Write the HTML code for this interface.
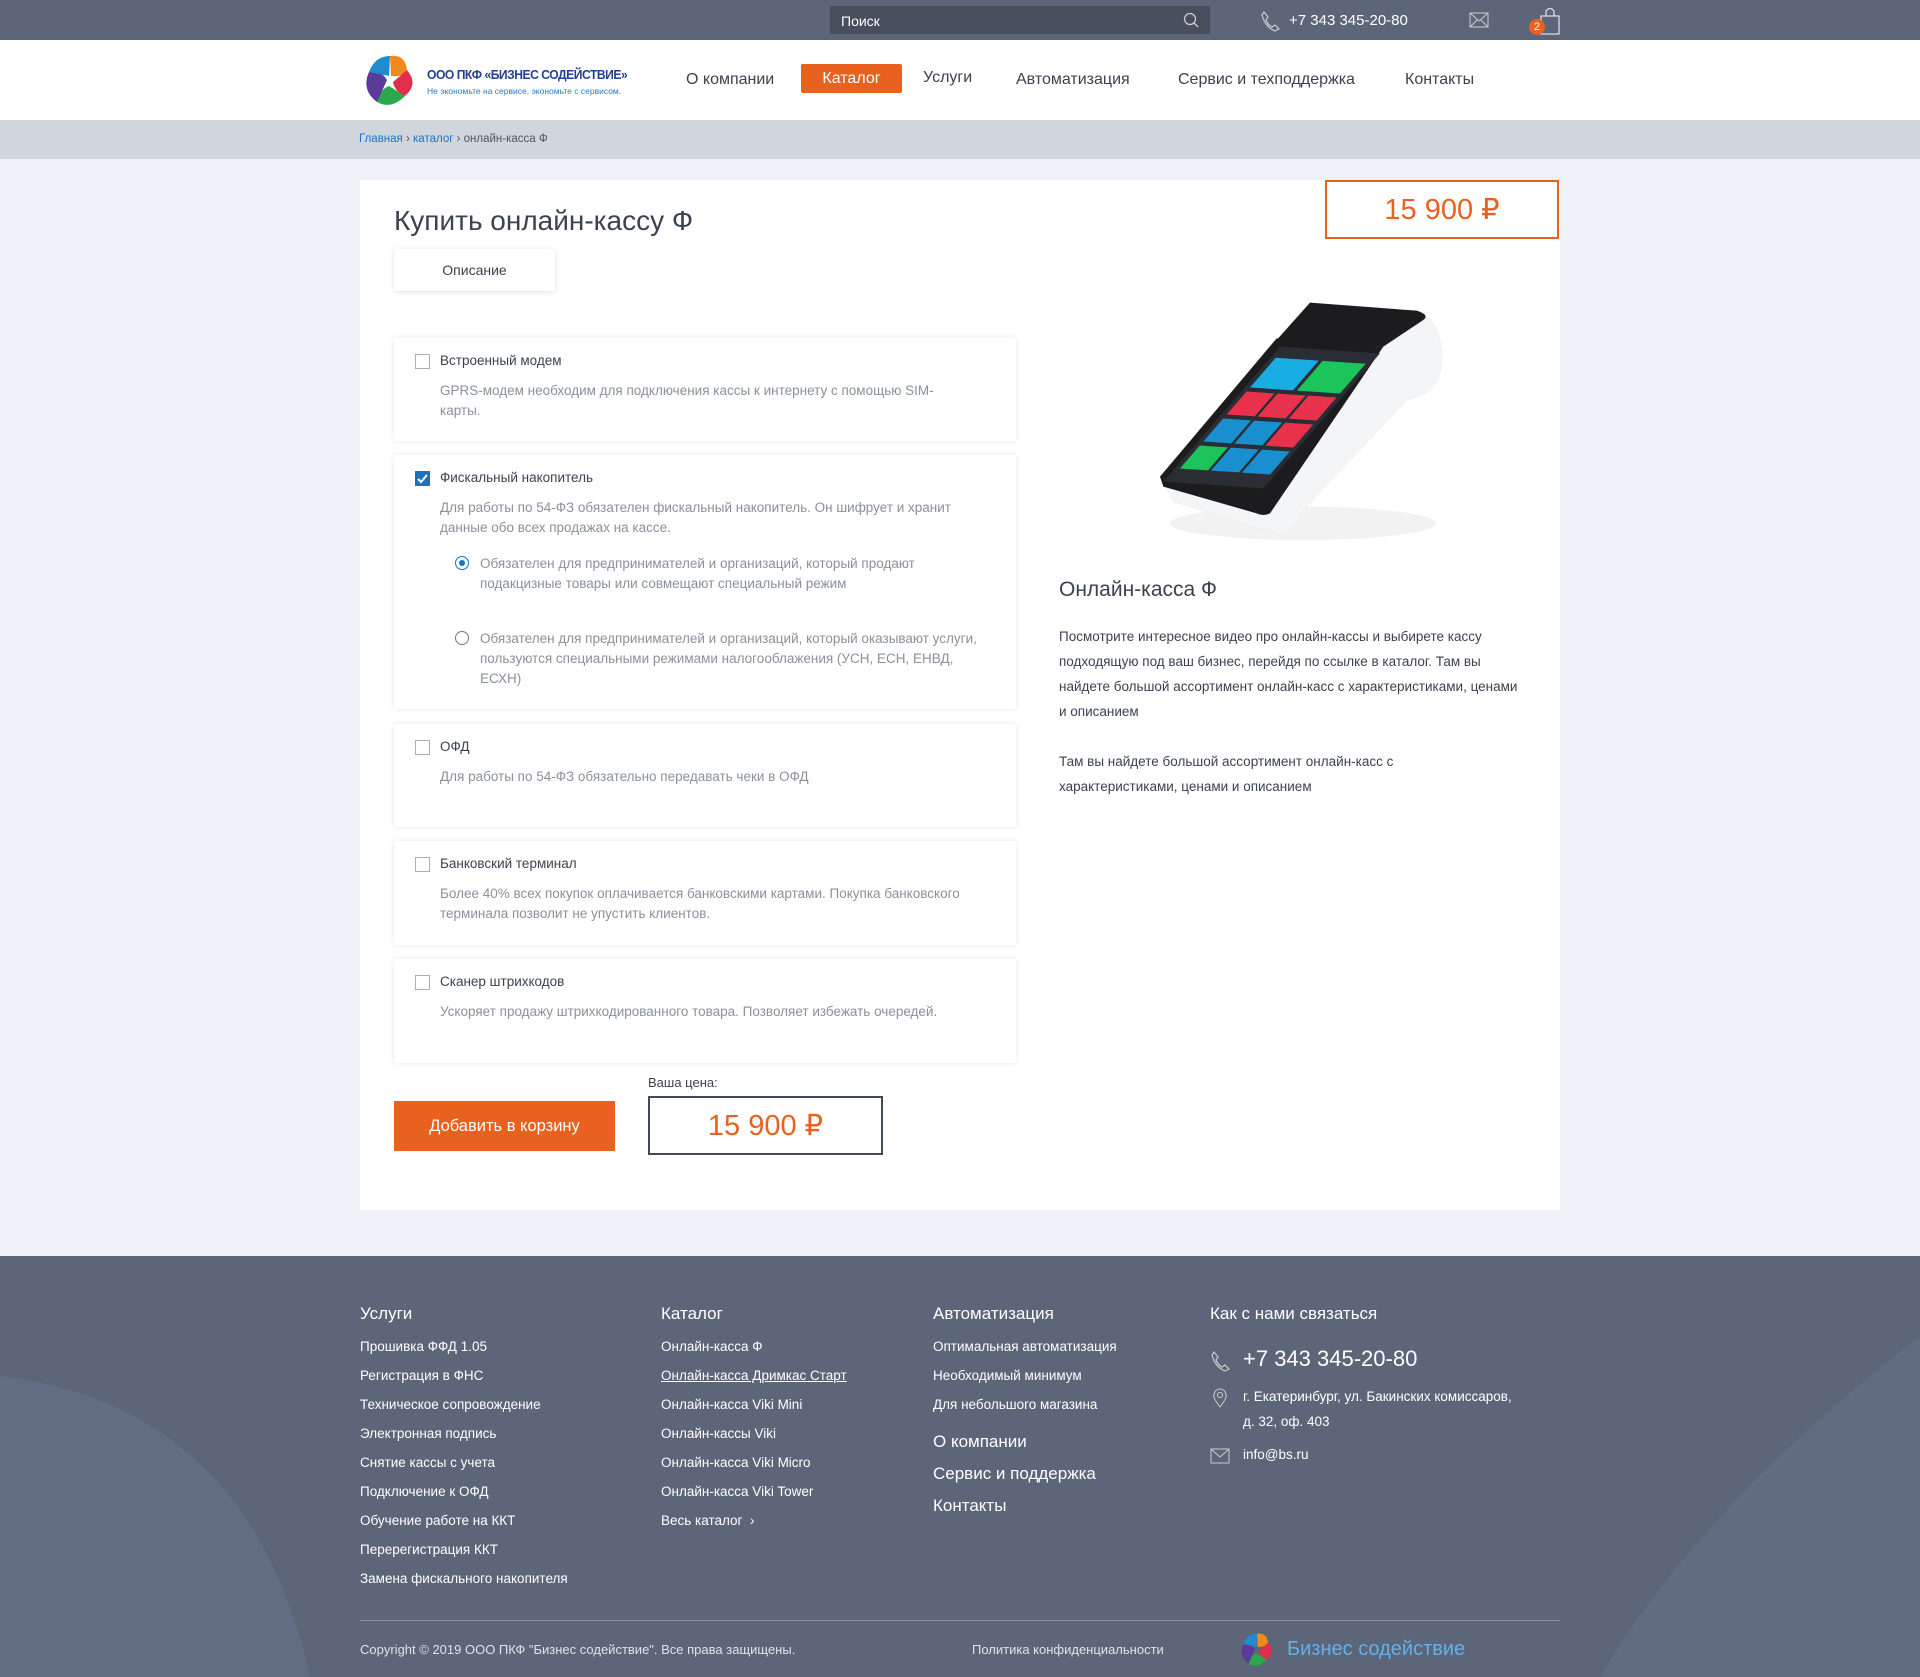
<!DOCTYPE html>
<html><head><meta charset="utf-8"><style>
*{margin:0;padding:0;box-sizing:border-box}
body{width:1920px;height:1677px;background:#eef2f6;font-family:"Liberation Sans",sans-serif;position:relative;overflow:hidden;color:#3b4250}
.a{position:absolute;white-space:nowrap}
.top{position:absolute;left:0;top:0;width:1920px;height:40px;background:#5c6678}
.hdr{position:absolute;left:0;top:40px;width:1920px;height:80px;background:#fff;box-shadow:0 2px 4px rgba(0,0,0,.12)}
.bc{position:absolute;left:0;top:120px;width:1920px;height:39px;background:#cfd6de}
.nav{font-size:16px;color:#3b4250;top:71px}
.card{position:absolute;left:360px;top:180px;width:1200px;height:1030px;background:#fff}
.opt{position:absolute;left:394px;width:622px;background:#fff;box-shadow:0 0 6px rgba(0,0,0,.1)}
.cb{position:absolute;left:21px;top:16px;width:15px;height:15px;border:1px solid #aab0b8;background:#fff}
.ot{position:absolute;left:46px;top:15px;font-size:13.5px;color:#3b4250}
.od{position:absolute;left:46px;top:43px;font-size:13.5px;color:#8a919c;line-height:20px;width:540px;white-space:normal}
.rd{position:absolute;width:14px;height:14px;border-radius:50%;border:1px solid #777}
.foot{position:absolute;left:0;top:1256px;width:1920px;height:421px;background:#5c6678;overflow:hidden}
.fh{font-size:17px;color:#fff}
.fl{font-size:13.5px;color:#fff}
</style></head><body>
<div class="top"></div>
<div class="a" style="left:830px;top:6px;width:380px;height:28px;background:#474f5d;border-radius:2px"></div>
<div class="a" style="left:841px;top:13px;font-size:14px;color:#fff">Поиск</div>
<svg class="a" style="left:1183px;top:12px" width="16" height="16"><circle cx="7" cy="7" r="5.5" fill="none" stroke="#ccc" stroke-width="1.3"/><line x1="11" y1="11" x2="15" y2="15" stroke="#ccc" stroke-width="1.3"/></svg>
<svg class="a" style="left:1260px;top:10px" width="20" height="22"><path d="M4 2 L8 7 L6 10 Q8 15 12 17 L15 15 L19 19 L15 21 Q5 17 2 5 Z" fill="none" stroke="#ccc" stroke-width="1.2"/></svg>
<div class="a" style="left:1289px;top:12px;font-size:15px;color:#fff">+7 343 345-20-80</div>
<svg class="a" style="left:1469px;top:12px" width="20" height="16"><rect x="1" y="1" width="18" height="14" fill="none" stroke="#ccc"/><path d="M1 1 L10 9 L19 1 M1 15 L8 8 M19 15 L12 8" fill="none" stroke="#ccc"/></svg>
<svg class="a" style="left:1538px;top:6px" width="24" height="30"><path d="M3 10 H21 V28 H3 Z M8 10 V5 Q12 0 16 5 V10" fill="none" stroke="#ddd" stroke-width="1.3"/></svg>
<div class="a" style="left:1529px;top:19px;width:16px;height:16px;border-radius:50%;background:#e8611f;color:#fff;font-size:11px;text-align:center;line-height:16px">2</div>

<div class="hdr"></div>
<svg class="a" style="left:361px;top:52px" width="58" height="58" viewBox="0 0 58 58">
<path d="M29 4 Q44 2 46 18 Q40 26 30 24 Z" fill="#f08a1c"/><path d="M46 18 Q58 32 44 44 Q34 40 32 30 Z" fill="#e02e4c"/><path d="M44 44 Q30 58 16 50 Q18 38 28 34 Z" fill="#2aa84a"/><path d="M16 50 Q0 38 8 20 Q20 18 26 28 Z" fill="#5a3a9a"/><path d="M8 20 Q14 4 29 4 L28 24 Z" fill="#1f8bd0"/>
</svg>
<div class="a" style="left:427px;top:67px;font-size:13px;font-weight:bold;color:#23408e;letter-spacing:-.5px;transform:scaleX(.93);transform-origin:left">ООО ПКФ «БИЗНЕС СОДЕЙСТВИЕ»</div>
<div class="a" style="left:427px;top:86px;font-size:8.5px;color:#2a78c4">Не экономьте на сервисе, экономьте с сервисом.</div>
<div class="a nav" style="left:686px">О компании</div>
<div class="a" style="left:801px;top:64px;width:101px;height:29px;background:#e8611f;border-radius:2px;color:#fff;font-size:16px;text-align:center;line-height:29px">Каталог</div>
<div class="a nav" style="left:923px;top:69px">Услуги</div>
<div class="a nav" style="left:1016px">Автоматизация</div>
<div class="a nav" style="left:1178px">Сервис и техподдержка</div>
<div class="a nav" style="left:1405px">Контакты</div>

<div class="bc"></div>
<div class="a" style="left:359px;top:133px;font-size:11.5px;color:#555"><span style="color:#1f73c0">Главная</span> › <span style="color:#1f73c0">каталог</span> › онлайн-касса Ф</div>

<div class="card"></div>
<div class="a" style="left:1325px;top:180px;width:234px;height:59px;border:2px solid #e8611f;background:#fff;color:#e8611f;font-size:29px;text-align:center;line-height:57px">15 900 ₽</div>
<div class="a" style="left:394px;top:205px;font-size:28px;color:#3b4250">Купить онлайн-кассу Ф</div>
<div class="a" style="left:394px;top:249px;width:161px;height:42px;background:#fff;box-shadow:0 1px 5px rgba(0,0,0,.12);font-size:14px;text-align:center;line-height:42px">Описание</div>

<div class="opt" style="top:338px;height:103px"><div class="cb"></div><div class="ot">Встроенный модем</div><div class="od" style="width:520px">GPRS-модем необходим для подключения кассы к интернету с помощью SIM-карты.</div></div>
<div class="opt" style="top:455px;height:254px"><div class="cb" style="background:#1a72c4;border-color:#1a72c4"><svg width="13" height="13" style="position:absolute;left:0;top:0"><path d="M2 7 L5 10 L11 3" stroke="#fff" stroke-width="2" fill="none"/></svg></div><div class="ot">Фискальный накопитель</div><div class="od">Для работы по 54-ФЗ обязателен фискальный накопитель. Он шифрует и хранит данные обо всех продажах на кассе.</div>
<div class="rd" style="left:61px;top:101px;border-color:#1a72c4"><div style="position:absolute;left:3px;top:3px;width:6px;height:6px;border-radius:50%;background:#1a72c4"></div></div>
<div class="od" style="left:86px;top:99px;width:500px">Обязателен для предпринимателей и организаций, который продают подакцизные товары или совмещают специальный режим</div>
<div class="rd" style="left:61px;top:176px"></div>
<div class="od" style="left:86px;top:174px;width:500px">Обязателен для предпринимателей и организаций, который оказывают услуги, пользуются специальными режимами налогооблажения (УСН, ЕСН, ЕНВД, ЕСХН)</div></div>
<div class="opt" style="top:724px;height:103px"><div class="cb"></div><div class="ot">ОФД</div><div class="od">Для работы по 54-ФЗ обязательно передавать чеки в ОФД</div></div>
<div class="opt" style="top:841px;height:104px"><div class="cb"></div><div class="ot">Банковский терминал</div><div class="od" style="width:520px">Более 40% всех покупок оплачивается банковскими картами. Покупка банковского терминала позволит не упустить клиентов.</div></div>
<div class="opt" style="top:959px;height:104px"><div class="cb"></div><div class="ot">Сканер штрихкодов</div><div class="od">Ускоряет продажу штрихкодированного товара. Позволяет избежать очередей.</div></div>

<div class="a" style="left:394px;top:1101px;width:221px;height:50px;background:#e8611f;color:#fff;font-size:16.5px;text-align:center;line-height:50px">Добавить в корзину</div>
<div class="a" style="left:648px;top:1075px;font-size:13px;color:#3b4250">Ваша цена:</div>
<div class="a" style="left:648px;top:1096px;width:235px;height:59px;border:2px solid #3f4a5c;color:#e8611f;font-size:29px;text-align:center;line-height:57px">15 900 ₽</div>

<svg class="a" style="left:1130px;top:280px" width="340" height="300" viewBox="0 0 1020 900">
<ellipse cx="520" cy="730" rx="400" ry="50" fill="#f2f2f2"/>
<path d="M95 600 L440 180 L540 70 L870 95 Q940 130 935 250 Q930 340 830 360 L520 690 Q480 770 440 760 L130 665 Z" fill="#f4f5f6" stroke="#e2e2e2"/>
<path d="M440 180 L540 68 L860 92 Q900 105 880 120 L760 200 Z" fill="#1c1c1e"/>
<path d="M90 590 L440 175 L760 200 L420 700 Q400 710 380 700 L100 620 Z" fill="#1c1c1e"/>
<g transform="matrix(300,20,-350,405,450,200)">
<rect x="0" y="0" width="1" height="1" fill="#2a2d33"/>
<rect x=".05" y=".08" width=".43" height=".22" fill="#18aee4"/><rect x=".52" y=".08" width=".43" height=".22" fill="#1cc45c"/>
<rect x=".05" y=".33" width=".28" height=".17" fill="#e8324c"/><rect x=".36" y=".33" width=".28" height=".17" fill="#e8324c"/><rect x=".67" y=".33" width=".28" height=".17" fill="#e8324c"/>
<rect x=".05" y=".53" width=".28" height=".17" fill="#1a8fd0"/><rect x=".36" y=".53" width=".28" height=".17" fill="#1a8fd0"/><rect x=".67" y=".53" width=".28" height=".17" fill="#e8324c"/>
<rect x=".05" y=".73" width=".28" height=".17" fill="#1cc45c"/><rect x=".36" y=".73" width=".28" height=".17" fill="#1a8fd0"/><rect x=".67" y=".73" width=".28" height=".17" fill="#1a8fd0"/>
</g>
</svg>
<div class="a" style="left:1059px;top:578px;font-size:21px;color:#3b4250">Онлайн-касса Ф</div>
<div class="a" style="left:1059px;top:624px;width:460px;white-space:normal;font-size:13.5px;line-height:25px;color:#3b4250">Посмотрите интересное видео про онлайн-кассы и выбирете кассу подходящую под ваш бизнес, перейдя по ссылке в каталог. Там вы найдете большой ассортимент онлайн-касс с характеристиками, ценами и описанием</div>
<div class="a" style="left:1059px;top:749px;width:420px;white-space:normal;font-size:13.5px;line-height:25px;color:#3b4250">Там вы найдете большой ассортимент онлайн-касс с характеристиками, ценами и описанием</div>

<div class="foot">
<svg style="position:absolute;left:0;top:0" width="1920" height="421"><path d="M0 120 Q250 150 310 421 L0 421 Z" fill="#66708a" opacity=".6"/><path d="M1920 80 Q1700 250 1600 421 L1920 421 Z" fill="#66708a" opacity=".5"/></svg>
</div>
<div class="a fh" style="left:360px;top:1304px">Услуги</div>
<div class="a fh" style="left:661px;top:1304px">Каталог</div>
<div class="a fh" style="left:933px;top:1304px">Автоматизация</div>
<div class="a fh" style="left:1210px;top:1304px">Как с нами связаться</div>
<div class="a fl" style="left:360px;top:1332px;line-height:29px">Прошивка ФФД 1.05<br>Регистрация в ФНС<br>Техническое сопровождение<br>Электронная подпись<br>Снятие кассы с учета<br>Подключение к ОФД<br>Обучение работе на ККТ<br>Перерегистрация ККТ<br>Замена фискального накопителя</div>
<div class="a fl" style="left:661px;top:1332px;line-height:29px">Онлайн-касса Ф<br><u>Онлайн-касса Дримкас Старт</u><br>Онлайн-касса Viki Mini<br>Онлайн-кассы Viki<br>Онлайн-касса Viki Micro<br>Онлайн-касса Viki Tower<br>Весь каталог &nbsp;›</div>
<div class="a fl" style="left:933px;top:1332px;line-height:29px">Оптимальная автоматизация<br>Необходимый минимум<br>Для небольшого магазина</div>
<div class="a" style="left:933px;top:1426px;font-size:17px;color:#fff;line-height:32px">О компании<br>Сервис и поддержка<br>Контакты</div>
<svg class="a" style="left:1210px;top:1350px" width="20" height="22"><path d="M4 2 L8 7 L6 10 Q8 15 12 17 L15 15 L19 19 L15 21 Q5 17 2 5 Z" fill="none" stroke="#ccc" stroke-width="1.2"/></svg>
<div class="a" style="left:1243px;top:1346px;font-size:22px;color:#fff">+7 343 345-20-80</div>
<svg class="a" style="left:1212px;top:1388px" width="16" height="20"><path d="M8 19 Q1 10 2 7 A6 6 0 0 1 14 7 Q15 10 8 19 Z" fill="none" stroke="#ccc"/><circle cx="8" cy="7" r="2.5" fill="none" stroke="#ccc"/></svg>
<div class="a fl" style="left:1243px;top:1384px;line-height:25px">г. Екатеринбург, ул. Бакинских комиссаров,<br>д. 32, оф. 403</div>
<svg class="a" style="left:1210px;top:1448px" width="20" height="16"><rect x="1" y="1" width="18" height="14" fill="none" stroke="#ccc"/><path d="M1 1 L10 9 L19 1" fill="none" stroke="#ccc"/></svg>
<div class="a fl" style="left:1243px;top:1447px">info@bs.ru</div>
<div class="a" style="left:360px;top:1620px;width:1200px;height:1px;background:#8a93a3"></div>
<div class="a" style="left:360px;top:1642px;font-size:13px;color:#dfe3e9">Copyright © 2019 ООО ПКФ "Бизнес содействие". Все права защищены.</div>
<div class="a" style="left:972px;top:1642px;font-size:13px;color:#dfe3e9">Политика конфиденциальности</div>
<svg class="a" style="left:1238px;top:1631px" width="38" height="38" viewBox="0 0 58 58">
<path d="M29 4 Q44 2 46 18 Q40 26 30 24 Z" fill="#f08a1c"/><path d="M46 18 Q58 32 44 44 Q34 40 32 30 Z" fill="#e02e4c"/><path d="M44 44 Q30 58 16 50 Q18 38 28 34 Z" fill="#2aa84a"/><path d="M16 50 Q0 38 8 20 Q20 18 26 28 Z" fill="#5a3a9a"/><path d="M8 20 Q14 4 29 4 L28 24 Z" fill="#1f8bd0"/></svg>
<div class="a" style="left:1287px;top:1638px;font-size:20px;color:#63b0ea">Бизнес содействие</div>
</body></html>
